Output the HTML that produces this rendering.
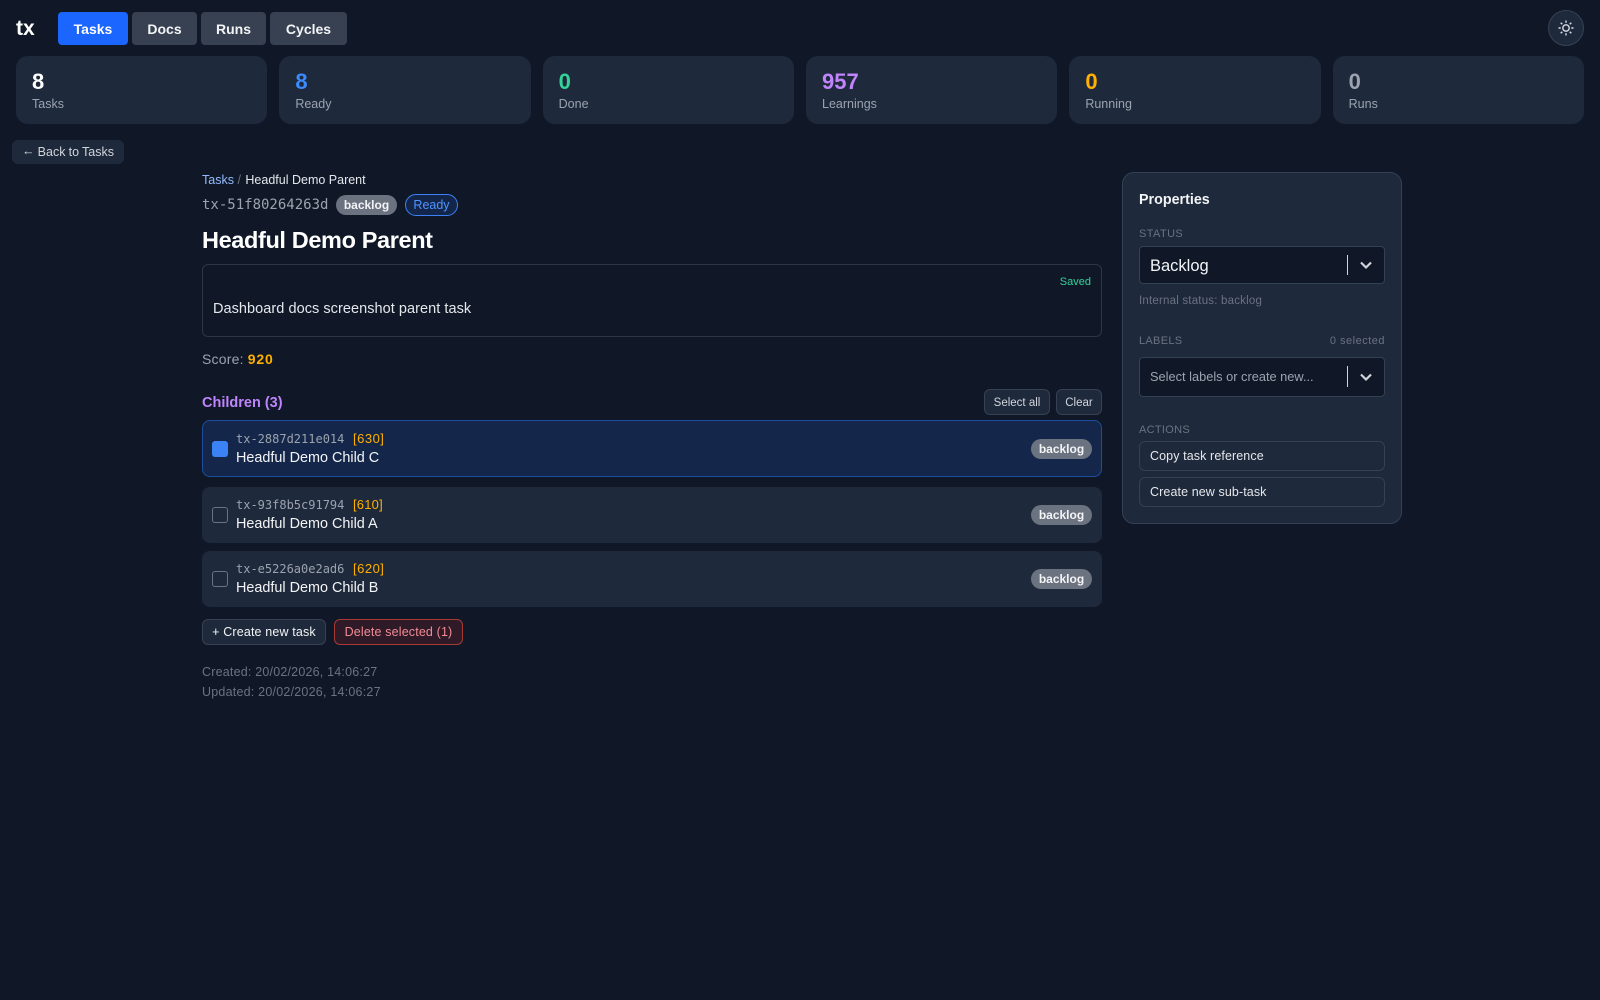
<!DOCTYPE html>
<html><head><meta charset="utf-8"><style>
*{box-sizing:border-box}
html,body{margin:0;padding:0;width:1600px;height:1000px;overflow:hidden;background:#101828;font-family:"Liberation Sans",sans-serif;color:#fff}
.a{position:absolute;white-space:nowrap}
.box{position:absolute}
.nav{position:absolute;top:12px;height:33px;line-height:34px;border-radius:4px;background:#374151;text-align:center;font-size:14px;font-weight:700;color:#f3f4f6}
.card{position:absolute;top:56px;height:68px;width:251.33px;border-radius:12px;background:#1e293b}
.num{position:absolute;left:16px;top:13px;font-size:22px;line-height:26px;font-weight:700}
.lab{position:absolute;left:16px;top:39px;font-size:12.5px;line-height:18px;color:#9ca3af}
.row{position:absolute;left:202px;width:900px;border-radius:8px;background:#1e293b}
.cb{position:absolute;left:212px;width:16px;height:16px;border-radius:3px;border:1px solid #6b7280}
.mono{font-family:"DejaVu Sans Mono","Liberation Mono",monospace}
.pill{position:absolute;left:1031px;width:61px;height:20px;line-height:20px;border-radius:10px;background:#6b7280;text-align:center;font-size:12px;font-weight:700;color:#f3f4f6}
.btn{position:absolute;border-radius:6px;background:#1e293b;border:1px solid #374151}
.cap{font-size:11px;line-height:14px;color:#6b7280;letter-spacing:.4px}
</style></head><body>
<div class="a" style="left:16px;top:15px;font-size:21px;line-height:28px;font-weight:700;letter-spacing:0">tx</div>
<div class="nav" style="left:58px;width:70px;background:#1a66ff;color:#fff">Tasks</div>
<div class="nav" style="left:132px;width:65px">Docs</div>
<div class="nav" style="left:201px;width:65px">Runs</div>
<div class="nav" style="left:270px;width:77px">Cycles</div>
<div class="box" style="left:1548px;top:10px;width:36px;height:36px;border-radius:50%;background:#1e293b;border:1px solid #374151"></div>
<svg class="box" style="left:1558px;top:20px" width="16" height="16" viewBox="0 0 16 16" fill="none" stroke="#d8dde5" stroke-width="1.4"><circle cx="8" cy="8" r="3.2"/><path d="M8 .5v2.200M8 13.300v2.200M.5 8h2.200M13.300 8h2.200M2.700 2.700l1.600 1.600M11.700 11.700l1.600 1.600M2.700 13.300l1.600-1.600M11.700 4.300l1.600-1.600"/></svg>

<div class="card" style="left:16px"><div class="num">8</div><div class="lab">Tasks</div></div>
<div class="card" style="left:279.33px"><div class="num" style="color:#3b8bff">8</div><div class="lab">Ready</div></div>
<div class="card" style="left:542.67px"><div class="num" style="color:#34d399">0</div><div class="lab">Done</div></div>
<div class="card" style="left:806px"><div class="num" style="color:#c084fc">957</div><div class="lab">Learnings</div></div>
<div class="card" style="left:1069.33px"><div class="num" style="color:#ffb000">0</div><div class="lab">Running</div></div>
<div class="card" style="left:1332.67px"><div class="num" style="color:#9ca3af">0</div><div class="lab">Runs</div></div>

<div class="box" style="left:12px;top:140px;width:112px;height:24px;border-radius:6px;background:#1e293b"></div>
<div class="a" style="left:22px;top:143px;font-size:12.5px;line-height:18px;color:#d1d5db;word-spacing:-.3px"><span style="position:relative;top:-1px">←</span> Back to Tasks</div>

<div class="a" style="left:202px;top:171px;font-size:12.5px;line-height:18px;color:#93bbfd">Tasks <span style="color:#6b7280">/</span> <span style="color:#e5e7eb;margin-left:1px">Headful Demo Parent</span></div>
<div class="a mono" style="left:202px;top:196px;font-size:14px;line-height:18px;color:#9ca3af">tx-51f80264263d</div>
<div class="pill" style="left:336px;top:195px">backlog</div>
<div class="box" style="left:405px;top:194px;width:53px;height:22px;border-radius:11px;background:#13264a;border:1px solid #3b82f6;text-align:center;font-size:12.5px;line-height:20px;color:#4f94ff">Ready</div>
<div class="a" style="left:202px;top:225px;font-size:23.5px;line-height:30px;font-weight:700;letter-spacing:-.37px">Headful Demo Parent</div>

<div class="box" style="left:202px;top:264px;width:900px;height:73px;border-radius:6px;border:1px solid #2b3648"></div>
<div class="a" style="right:509px;top:275px;font-size:11px;line-height:14px;color:#34d399">Saved</div>
<div class="a" style="left:213px;top:300px;font-size:14.5px;line-height:18px;color:#e5e7eb;letter-spacing:.05px">Dashboard docs screenshot parent task</div>
<div class="a" style="left:202px;top:350px;font-size:14px;line-height:18px;color:#9ca3af;letter-spacing:.2px">Score: <span style="color:#ffb000;font-weight:700;letter-spacing:.8px">920</span></div>

<div class="a" style="left:202px;top:394px;font-size:14.5px;line-height:18px;font-weight:700;color:#c084fc">Children (3)</div>
<div class="btn" style="left:984px;top:389px;width:66px;height:26px;text-align:center;font-size:11.5px;line-height:26px;color:#d1d5db">Select all</div>
<div class="btn" style="left:1056px;top:389px;width:46px;height:26px;text-align:center;font-size:11.5px;line-height:26px;color:#d1d5db">Clear</div>

<div class="row" style="top:420px;height:57px;background:#14274a;border:1px solid #1d4d9c"></div>
<div class="cb" style="top:441px;background:#3b82f6;border-color:#3b82f6"></div>
<div class="a mono" style="left:236px;top:431px;font-size:12px;line-height:16px;color:#9ca3af">tx-2887d211e014</div>
<div class="a" style="left:353px;top:431px;font-size:13px;line-height:16px;color:#ffb000;letter-spacing:.5px">[630]</div>
<div class="a" style="left:236px;top:449px;font-size:14.4px;line-height:18px;color:#f3f4f6">Headful Demo Child C</div>
<div class="pill" style="top:439px">backlog</div>

<div class="row" style="top:487px;height:56px"></div>
<div class="cb" style="top:507px"></div>
<div class="a mono" style="left:236px;top:497px;font-size:12px;line-height:16px;color:#9ca3af">tx-93f8b5c91794</div>
<div class="a" style="left:353px;top:497px;font-size:13px;line-height:16px;color:#ffb000;letter-spacing:.2px">[610]</div>
<div class="a" style="left:236px;top:515px;font-size:14.4px;line-height:18px;color:#f3f4f6">Headful Demo Child A</div>
<div class="pill" style="top:505px">backlog</div>

<div class="row" style="top:551px;height:56px"></div>
<div class="cb" style="top:571px"></div>
<div class="a mono" style="left:236px;top:561px;font-size:12px;line-height:16px;color:#9ca3af">tx-e5226a0e2ad6</div>
<div class="a" style="left:353px;top:561px;font-size:13px;line-height:16px;color:#ffb000;letter-spacing:.5px">[620]</div>
<div class="a" style="left:236px;top:579px;font-size:14.4px;line-height:18px;color:#f3f4f6">Headful Demo Child B</div>
<div class="pill" style="top:569px">backlog</div>

<div class="btn" style="left:202px;top:619px;width:124px;height:26px;text-align:center;font-size:12.5px;line-height:24px;color:#f3f4f6;letter-spacing:.15px">+ Create new task</div>
<div class="btn" style="left:334px;top:619px;width:129px;height:26px;text-align:center;font-size:12.5px;line-height:24px;color:#f28b95;background:#2f1a28;border-color:#a83a34;letter-spacing:.15px">Delete selected (1)</div>
<div class="a" style="left:202px;top:663px;font-size:12.5px;line-height:18px;color:#6b7280;letter-spacing:.2px">Created: 20/02/2026, 14:06:27</div>
<div class="a" style="left:202px;top:683px;font-size:12.5px;line-height:18px;color:#6b7280;letter-spacing:.22px">Updated: 20/02/2026, 14:06:27</div>

<div class="box" style="left:1122px;top:172px;width:280px;height:352px;border-radius:12px;background:#1e293b;border:1px solid #334155"></div>
<div class="a" style="left:1139px;top:191px;font-size:14.3px;line-height:18px;font-weight:700;color:#f3f4f6">Properties</div>
<div class="a cap" style="left:1139px;top:227px">STATUS</div>
<div class="box" style="left:1139px;top:246px;width:246px;height:38px;border-radius:4px;background:#101828;border:1px solid #334155"></div>
<div class="a" style="left:1150px;top:256px;font-size:16.5px;line-height:20px;color:#f3f4f6">Backlog</div>
<div class="box" style="left:1347px;top:255px;width:1px;height:20px;background:#d1d5db"></div>
<svg class="box" style="left:1359px;top:260px" width="14" height="10" viewBox="0 0 14 10" fill="none" stroke="#d1d5db" stroke-width="2.2"><path d="M2 2.500l5 5 5-5"/></svg>
<div class="a" style="left:1139px;top:294px;font-size:11.5px;line-height:14px;color:#6b7280;letter-spacing:.2px">Internal status: backlog</div>
<div class="a cap" style="left:1139px;top:334px;letter-spacing:.3px">LABELS</div>
<div class="a" style="right:215px;top:334px;font-size:11px;line-height:14px;color:#6b7280;letter-spacing:.5px">0 selected</div>
<div class="box" style="left:1139px;top:357px;width:246px;height:40px;border-radius:4px;background:#101828;border:1px solid #334155"></div>
<div class="a" style="left:1150px;top:368px;font-size:12.8px;line-height:18px;color:#9ca3af">Select labels or create new...</div>
<div class="box" style="left:1347px;top:366px;width:1px;height:21px;background:#d1d5db"></div>
<svg class="box" style="left:1359px;top:372px" width="14" height="10" viewBox="0 0 14 10" fill="none" stroke="#d1d5db" stroke-width="2.2"><path d="M2 2.500l5 5 5-5"/></svg>
<div class="a cap" style="left:1139px;top:423px;letter-spacing:.3px">ACTIONS</div>
<div class="box" style="left:1139px;top:441px;width:246px;height:30px;border-radius:6px;border:1px solid #334155"></div>
<div class="a" style="left:1150px;top:447px;font-size:12.5px;line-height:18px;color:#e5e7eb;letter-spacing:.1px">Copy task reference</div>
<div class="box" style="left:1139px;top:477px;width:246px;height:30px;border-radius:6px;border:1px solid #334155"></div>
<div class="a" style="left:1150px;top:483px;font-size:12.5px;line-height:18px;color:#e5e7eb;letter-spacing:.1px">Create new sub-task</div>
</body></html>
